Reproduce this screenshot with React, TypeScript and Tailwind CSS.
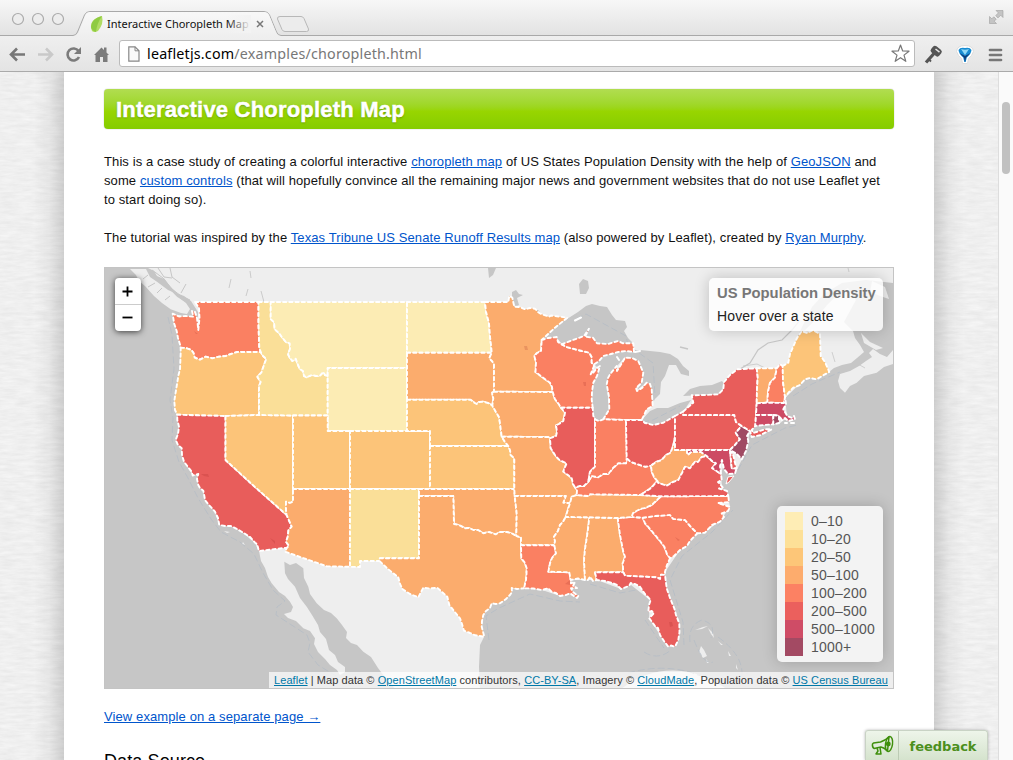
import React from "react";

type Pt = [number, number];

/* Borders shared by neighbouring states. A leading "-" in a ring walks the border backwards. */
const ARCS: Record<string, string> = {
  waN: "195,302 258.5,302",
  waSound: "172.7,313.7 176,315 179,316.5 186,316 193.3,316.7 192,311 195,312 197,318 198.3,330 199.5,318 199,308 195,302",
  waW: "180.7,347.7 180,344.5 178,338 176.7,331 174,323 172.7,313.7",
  waE: "258.5,302 258.5,325 259.3,347.7 260.7,352",
  waS: "260.7,352 237.3,352 231,354 225.7,356 219,356.7 212.3,358.3 205.7,356.7 200,359.7 194.7,357.7 193.5,353 191.3,350 186,348 180.7,347.7",
  orW: "177.3,414.7 175,410 174.3,401 176.7,386 178.5,375 180,369.3 180.7,352.7 180.7,347.7",
  orE: "260.7,352 263,356 266.3,358.7 264,365 261.3,372.7 257.3,376.7 260.7,382 259,386 259,415",
  orCa: "177.3,414.7 200,415.4 225.5,416",
  orNv: "225.5,416 259,415",
  idNv: "259,415 293,415.5",
  idUt: "293,415.5 327.7,415.5",
  idN: "258.5,302 270.7,302",
  idMt: "270.7,302 270.7,319.3 274,322 274.7,329.3 279,333 282.3,337.7 286,342 289.7,343.3 290,349 288,354.3 290,358 292.3,361 295.7,358.7 298,365 300,369.3 303,371 304,376 306.7,377.3 311.7,375 316,376 320,375.7 323.3,372 325,375 327.7,376",
  idWy: "327.7,376 327.7,415.5",
  mtWy: "327.7,376 327.7,368 407,368",
  mtN: "270.7,302 407,302",
  mtNd: "407,302 407,352.7",
  mtSd: "407,352.7 407,368",
  wySd: "407,368 407,399.7",
  wyNe: "407,399.7 407,431",
  wyCo: "350,431 407,431",
  wyUt: "327.7,415.5 327.7,431 350,431",
  ndN: "407,302 485,302",
  ndE: "485,302 486,311.7 489,323.3 490,336.7 491,345 491.7,352.7",
  ndSd: "407,352.7 491.7,352.7",
  sdMn: "491.7,352.7 489.3,358.3 492,361 494,364 494,391.7",
  sdIa: "494,391.7 492,392.7 493.3,398.3 492.3,405.5",
  sdNe: "407,399.7 470.7,399.7 474,402.5 476.7,404 479,402 483.3,401.7 488,403 492.3,405.5",
  neIa: "492.3,405.5 496.7,413.3 499,417 500,423.3 501.7,436.7",
  neMo: "501.7,436.7 505,442 508.3,446",
  neKs: "430,446 508.3,446",
  neCo: "407,431 430,431 430,446",
  coKs: "430,446 430,489",
  utCo: "350,431 350,489",
  utNv: "293,415.5 293,489",
  utAz: "293,489 350,489",
  nvAz: "293,489 293,501.7 290,503 286,501.7 286,510 286.7,515",
  caNv: "225.5,416 225.5,460 255,487 286.7,515",
  caAz: "286.7,515 291.7,526.7 288.5,530 287.7,537 286,541.7 289,546 287,547.7",
  caS: "287,547.7 259,551",
  caW: "259,551 257,544 255,542.7 250,537 243.3,532.7 237,529 230.7,526 225,526 219.3,525 218,518 215,511.7 209,505 205,500 204,494 203.3,490.7 200,488 198.3,485 197,479 198.3,474 192.7,475.5 191.7,471.7 188,467 184,461.7 182,455 181.7,448.3 178,445 175.7,440 178,434 179,426.7 177.3,420 177.3,414.7",
  azS: "287,547.7 285,551.7 306,559 326.7,566.3 350,566.8",
  azNm: "350,489 350,566.8",
  coNm: "350,489 419,489",
  coOk: "419,489 430,489",
  nmOk: "419,489 419,496",
  nmTx: "419,496 419,558.3 379.7,558.3 379.5,561",
  nmS: "379.5,561 360,561 360,567 350,566.8",
  ksOk: "430,489 514.3,489",
  ksMo: "508.3,446 510,450 510.7,455 514.3,458.3 514.3,489",
  okMo: "514.3,489 514.7,496",
  okAr: "514.7,496 516.7,513.3 516.3,536",
  okTx: "419,496 453.3,496 454,524 459,525 465,528.3 469,528 473.3,530 478,530 483.3,533.3 489,532 495.7,534.3 500,532 506.7,532 512,533.5 516.3,536",
  txAr: "516.3,536 521,537.3 521,545.3",
  txLa: "521,545.3 521.3,558.3 525,563 526.7,568.3 526.5,574 526,580 524,588.3",
  txCoast: "524,588.3 517,589 511.7,588 512,592 510,595 506,599 500,603.3 496,604 491.7,603.3 490,608 486,611 483.3,615 482,621 481.7,626.7 484.3,636.7",
  txRio: "484.3,636.7 475,635.3 470,633 464,630.7 462,624 460,618.3 454,611 449.3,605 447.3,596.7 442,592 437.3,587.7 430,588.5 423.3,587.7 421,592 418.3,597.3 410,594 402.7,589.3 400,584 398.3,577.3 388,569 379.5,561",
  mnN: "485,302 508.3,302 509.3,296 512.3,297.7 514.3,306.7 520,307 525,309.3 530,308 535,308.7 538,312 541.7,314.3 549.3,316.7 551,315.5 567.3,317.7",
  mnShore: "567.3,317.7 555,327.7 541.7,340",
  mnWi: "541.7,340 541,351 537,353 534.3,356 536,362 535.5,372 542,377 550,382.7 552,387 552.7,392",
  mnIa: "494,391.7 552.7,392",
  iaWi: "552.7,392 555,399.3 558,403 561,407.7",
  iaIl: "561,407.7 565,412.7 563.3,421 559,424 556,425.3 557,432 556,436 550,438.3",
  iaMo: "501.7,436.7 548,437 550,438.3",
  moIl: "550,438.3 550.7,448.3 555,455 559.3,460 566.7,463.3 565,467 563.3,471.7 568,475 571.7,478.3 573,484 575,487.3",
  moKy: "575,487.3 577,490 576.7,495",
  moTn: "576.7,495 571.7,496.7 570,503.3",
  moAr: "570,503.3 563.3,502.7 565.7,496 514.7,496",
  arTn: "570,503.3 568,509 565.7,517",
  arMs: "565.7,517 563,522 560,525 558,531 554,536.7 555,541 554.3,545.3",
  arLa: "521,545.3 554.3,545.3",
  laMs: "554.3,545.3 556,553.3 552,558 550,563.3 548.3,571.7 569.3,572.3 570.7,580",
  laCoast: "570.7,580 571,583.3 575,582 573,586 577,588 571,588.3 573,592 578.3,596 577,598 570,593.3 566,595 560,596 556,593 552,592 548.3,588.3 541.7,590 533,588.5 524,588.3",
  msTn: "565.7,517 589.3,517.3",
  msAl: "589.3,517.3 588,529 586.7,538.3 585,549 584,560 585,580",
  msCoast: "585,580 578,578.5 570.7,580",
  alTn: "589.3,517.3 617.7,518",
  alGa: "617.7,518 620,535 623.3,551.7 625,556.7 622.7,563.3 623.3,572.3",
  alFl: "623.3,572.3 595,572.3 596.7,580",
  alCoast: "596.7,580 593,581 590,576.7 588,580 585,580",
  gaTn: "617.7,518 631.7,517",
  gaNc: "631.7,517 642.7,517.7",
  gaSc: "642.7,517.7 645,523.3 650,529 655,535 660,541 664.3,546.7 667,554 670,558.3",
  gaCoast: "670,558.3 667,565 665,571.7 665,575",
  gaFl: "665,575 661,574.7 660,579 656.7,577.3 640,576.5 625,575.7 623.3,572.3",
  flCoast: "665,575 666.7,588.3 670,598 674.3,608.3 676,615 679.3,623.3 679.5,632 678.3,640 675,646.7 671,645.5 668.3,646.7 664,641 660,635 658,628 655,626 652,622 649.3,618.3 654,613 651.7,611 648.3,612 649,605 650.7,600 645,594 640,586.7 635,584 630.7,583 629,586 621,589 617,585 613.3,583.3 605,581 596.7,580",
  scNc: "642.7,517.7 655,516 670,515 673.3,519 685,520 691,527 697.3,533.3",
  scCoast: "697.3,533.3 690,541 687,546 680,550 674,556 670,558.3",
  ncTn: "631.7,517 633,513 640,509 645,508 651.7,505 657,500 661,496.3",
  ncVa: "661,496.3 728.3,496",
  ncCoast: "728.3,496 729,502 718,503 730,507 728,511 721.7,513.3 724,517 720,521.7 712,525 705,532.7 697.3,533.3",
  tnVa: "640,495 661,496.3",
  tnKy: "576.7,495 588,496 590,494.3 640,495",
  kyIl: "575,487.3 580,486 584,486 588.3,481.7",
  kyIn: "588.3,481.7 591.7,476 598.3,477.3 603,474 608.3,474 613,468 618.3,463.3 626,463.3 626.7,458.3",
  kyOh: "626.7,458.3 631,462 636.7,464 645,466.7 651,465.7",
  kyWv: "651,465.7 651.7,471.7 654,477 657.3,481",
  kyVa: "657.3,481 651,488 645,492 640,495",
  ilWi: "561,407.7 592.7,407.7",
  ilLake: "592.7,407.7 593.3,416 595,419.3",
  ilIn: "595,419.3 595,466.7 590,471.7 588.3,481.7",
  inLake: "595,419.3 599,421 603.3,419.3",
  inMi: "603.3,419.3 626,420",
  inOh: "626,420 626.7,458.3",
  ohMi: "626,420 641.7,420",
  ohLake: "641.7,420 645,423 653.3,425 663.3,422.7 675,416",
  ohPa: "675,416 675,437",
  ohWv: "675,437 673.3,445 670.7,452.7 666,455 661.7,460 656,462 651,465.7",
  paLake: "675,416 683.3,411.5",
  paNy: "683.3,411.5 683.3,415 734.3,415 736,422 741.7,426",
  paNj: "741.7,426 735.7,432.7 740,439.3 735,445 730,450",
  paS: "730,450 686.7,450",
  paWv: "686.7,450 675,450 675,437",
  wvMd: "686.7,450 687.7,455 691,452 695,451.7 701,452 706.7,456",
  wvVa: "706.7,456 701.7,457 698,462 695,461.7 690,468.3 685,466.7 682,473 678.3,480 673,482 666.7,485.7 658.3,483 657.3,481",
  mdVa: "706.7,456 712,461 716,463.3 712,468 721,474",
  mdBay: "721,474 720,466 722,460 724,469 728,474 735,473.5 736.5,468.3",
  mdDe: "736.5,468.3 731.7,468.3 730,450",
  deE: "730,450 733.5,456 734.5,461 736.5,468.3",
  vaE: "721,474 721.7,480 718,482 722.7,487.3 719,488.5 727,491 728.3,496",
  njE: "741.7,426 750,431 747,436 748.3,441 746,451 741.7,459.3 737,454 730,450",
  nyN: "683.3,411.5 693.3,402.7 691.7,395.3 705,395 718.3,394.3 723.3,389.3 724,382 730,375 737.3,369.3 756.7,368.3",
  nyVt: "756.7,368.3 757.7,377 757,389.3 756.7,403.3",
  nyMa: "756.7,403.3 756,415",
  nyCt: "756,415 755.3,426",
  nyS: "755.3,426 751.7,430 753.3,433 765,429.3 771.7,429.3 760,435.3 751.7,437 750,431 741.7,426",
  vtN: "756.7,368.3 776.7,368.3",
  vtNh: "776.7,368.3 775,377.7 770,382.7 768,392 767.3,402.7",
  vtMa: "767.3,402.7 756.7,403.3",
  nhN: "776.7,368.3 780,364.3 782.7,366",
  nhMe: "782.7,366 783,382 785,397",
  nhMa: "785,397 784,403 767.3,402.7",
  meE: "782.7,366 788.3,362.7 790,354 793,347 797,338 801.7,331 807,333 813,330 820,334 820.7,356 825,362 829.3,372 822,376 816.7,379.3 810,378 805,379.3 800,385 793.3,387.7 789,392 785,397",
  maCoast: "785,397 786,404 783.3,409.3 787.3,416 792,418 794,416 795,419.3 788.3,421 785,418 782,420 779,416",
  maCt: "756,415 773.3,415",
  maRi: "773.3,415 779,416",
  ctRi: "773.3,415 773.3,424.3",
  riE: "779,416 779,423 773.3,424.3",
  ctS: "773.3,424.3 764,425 755.3,426",
  wiN: "541.7,340 548,338 556.7,337 558,342 561.7,344.3",
  wiMi: "561.7,344.3 566.7,347 578,350 589.3,352.7 591.7,357 591.7,362.7",
  wiLake: "591.7,362.7 594,366 590.7,374.3 593,373 597,368 600,366 597,376 593.3,382.7 592,392 591.7,399.3 592.7,407.7",
  upN: "561.7,344.3 573,340 584,336 589,328.7 585,336.7 593,337.7 597,343.3 608,344 618,341 623,343.3 633.3,343.3 634,352 626,351 618.3,352 611,354 603.3,356 599,361 594.3,364.3 591.7,362.7",
  miLp: "603.3,419.3 609.3,409.3 609,397 606.7,384.3 608,378 610,374.3 616.7,366 617,371 622,363 625,357.7 632,358 638.3,361 643.3,372.7 641.7,382.7 636,388 637,391 642,388 646.7,382.7 650,384 651.7,389.3 652.7,406 646.7,409.3 641.7,420",
};

const C = {
  d0: "#fcecb4",
  d10: "#fadf98",
  d20: "#fcc479",
  d50: "#fbac6d",
  d100: "#fa8062",
  d200: "#e85d5b",
  d500: "#cd4a64",
  d1000: "#a04a63",
};

const STATES: [string, string, string][] = [
  ["Washington", C.d100, "waN waE waS waW waSound"],
  ["Oregon", C.d20, "-waS orE -orNv -orCa orW"],
  ["California", C.d200, "orCa caNv caAz caS caW"],
  ["Nevada", C.d20, "orNv idNv utNv nvAz -caNv"],
  ["Idaho", C.d10, "idN idMt idWy -idUt -idNv -orE -waE"],
  ["Montana", C.d0, "mtN mtNd mtSd -mtWy -idMt"],
  ["Wyoming", C.d0, "mtWy wySd wyNe -wyCo -wyUt -idWy"],
  ["Utah", C.d20, "idUt wyUt utCo -utAz -utNv"],
  ["Colorado", C.d20, "wyCo neCo coKs -coOk -coNm -utCo"],
  ["Arizona", C.d50, "utAz azNm -azS -caAz -nvAz"],
  ["New Mexico", C.d10, "coNm nmOk nmTx nmS -azNm"],
  ["North Dakota", C.d0, "ndN ndE -ndSd -mtNd"],
  ["South Dakota", C.d50, "ndSd sdMn sdIa -sdNe -wySd -mtSd"],
  ["Nebraska", C.d20, "sdNe neIa neMo -neKs -neCo -wyNe"],
  ["Kansas", C.d20, "neKs ksMo -ksOk -coKs"],
  ["Oklahoma", C.d50, "coOk ksOk okMo okAr -okTx -nmOk"],
  ["Texas", C.d50, "okTx txAr txLa txCoast txRio -nmTx"],
  ["Minnesota", C.d50, "mnN mnShore mnWi -mnIa -sdMn -ndE"],
  ["Iowa", C.d50, "mnIa iaWi iaIl -iaMo -neIa -sdIa"],
  ["Missouri", C.d50, "iaMo moIl moKy moTn moAr -okMo -ksMo -neMo"],
  ["Arkansas", C.d50, "-moAr arTn arMs -arLa -txAr -okAr"],
  ["Louisiana", C.d100, "arLa laMs laCoast -txLa"],
  ["Mississippi", C.d50, "msTn msAl msCoast -laMs -arMs"],
  ["Alabama", C.d50, "alTn alGa alFl alCoast -msAl"],
  ["Georgia", C.d100, "gaTn gaNc gaSc gaCoast gaFl -alGa"],
  ["Florida", C.d200, "-gaFl flCoast -alFl"],
  ["South Carolina", C.d100, "scNc scCoast -gaSc"],
  ["North Carolina", C.d100, "ncVa ncCoast -scNc -gaNc ncTn"],
  ["Tennessee", C.d50, "tnKy tnVa -ncTn -gaTn -alTn -msTn -arTn -moTn"],
  ["Kentucky", C.d100, "kyIl kyIn kyOh kyWv kyVa -tnKy -moKy"],
  ["Wisconsin", C.d100, "wiN wiMi wiLake -ilWi -iaWi -mnWi"],
  ["Illinois", C.d200, "ilWi ilLake ilIn -kyIl -moIl -iaIl"],
  ["Michigan Upper", C.d100, "upN -wiMi"],
  ["Michigan Lower", C.d100, "miLp -ohMi -inMi"],
  ["Indiana", C.d100, "inLake inMi inOh -kyIn -ilIn"],
  ["Ohio", C.d200, "ohMi ohLake ohPa ohWv -kyOh -inOh"],
  ["West Virginia", C.d50, "-paWv wvMd wvVa -kyWv -ohWv"],
  ["Virginia", C.d200, "mdVa vaE -ncVa -tnVa -kyVa -wvVa"],
  ["Pennsylvania", C.d200, "paLake paNy paNj paS paWv -ohPa"],
  ["Maryland", C.d500, "-paS -mdDe -mdBay -mdVa -wvMd"],
  ["Delaware", C.d200, "deE mdDe"],
  ["New Jersey", C.d1000, "njE -paNj"],
  ["New York", C.d200, "nyN nyVt nyMa nyCt nyS -paNy"],
  ["Vermont", C.d50, "vtN vtNh vtMa -nyVt"],
  ["New Hampshire", C.d100, "nhN nhMe nhMa -vtNh"],
  ["Maine", C.d20, "meE -nhMe"],
  ["Massachusetts", C.d500, "-vtMa -nhMa maCoast -maRi -maCt -nyMa"],
  ["Connecticut", C.d500, "maCt ctRi ctS -nyCt"],
  ["Rhode Island", C.d1000, "maRi riE -ctRi"],
];

function arcPoints(ref: string): Pt[] {
  const back = ref.startsWith("-");
  const pts = ARCS[back ? ref.slice(1) : ref].split(" ").map((p) => p.split(",").map(Number) as Pt);
  return back ? pts.reverse() : pts;
}

function ring(spec: string): string {
  const pts = spec.split(" ").flatMap(arcPoints);
  return "M" + pts.map((p) => p.join(",")).join("L") + "Z";
}

const WATER = "#c6c6c6";
const LAND = "#eeeeee";

function Basemap() {
  return (
    <g>
      <rect x="105" y="268" width="788" height="420" fill={WATER} />
      {/* continent */}
      <path
        fill={LAND}
        d="M148,268 L154,271 157,276 164,279 168,285 175.7,292.7 184,296 191,301 198,312 198,330 193,318 173,314 177,331 181,348 180,369 174,401 177,415 179,427 176,440 182,448 184,462 192,474 198,476 203,491 205,500 215,512 219,525 231,526 243,533 255,543 259,551 261,561 265,568 268,577 271.7,583.3 279,592 285,596 290,601.7 293,607 291,612 284,614 288,618 296,621 303.3,628.3 310,631 315,638.3 314,644 318,652 325,659 330,665 337,670 340,675 345,672 345,667 338,662 335,655 329,650 326,639 320,632 318,625 312,615 306.7,606.7 300,598 295,586.7 288,579 285,573.3 284.3,561.7 290,565 296,563 303.3,568.3 304,578 308.3,586.7 310,594 316.7,603.3 324,610 331,613 336.7,618.3 342,625 347,632 346,638 351,643 357,645 363.3,651.7 371,657 378,668 384,676 396,690 480,690 479,666.7 480,645 484,637 482,627 483,615 492,603 510,595 512,589 524,588 542,590 560,596 570,590 571,580 597,580 621,589 631,585 650,600 649,618 660,635 669,647 678,640 679,623 667,588 665,572 680,550 697,533 705,532 720,521 730,507 728,496 722,487 721,474 727,454 735,474 742,459 748,441 750,431 755,426 779,424 784,420 795,419 787,416 785,398 805,379 829,372 834,368 842,365 851,363 857,358 864,352 860,345 855,338 853,331 844,322 856,300 848,288 838,294 827,305 814,321 801,334 797,338 803,325 812,307 824,294 842,283 866,280 893,283 V268Z"
      />
      {/* Nova Scotia and the gulf shore */}
      <path fill={LAND} d="M838,381 L840,374 850,371 859,366 866,361 872,357 869,353 873,349 880,354 887,357 893,350 893,364 884,367 876.7,372.7 864,376 856.7,382.7 850,386 845,392.7 840,388Z" />
      <path fill={LAND} d="M861,333 L870,342 883,348 876,350 864,343Z M872,281 L885,287 889,299 880,296 870,292Z" />
      {/* Vancouver Island */}
      <path fill={LAND} d="M130,269 L146,269 150,277 157.3,282 168,290 175,293 180.7,299 186,303 190,309 187,314 181,313 170.7,309.3 162,303 154,296 145,286 139,281 136,275Z" />
      <g fill="none" stroke={WATER} strokeWidth="1">
        <path d="M143,279 l5,-4 M148,287 l7,-4 M157,293 l5,-5 M165,300 l5,-4 M158,268 l6,9 8,1 M170,268 l2,9 8,6 M181,293 l5,-9 M152,270 l11,8 9,11 9,7 9,4" />
        <path strokeWidth="2.4" d="M163,279 l6,8 9,9 10,6" />
        <path strokeWidth=".9" d="M231,279 l-2,9 M250,271 l1,7 M261,291 l3,11 M248,289 l-2,7" />
      </g>
      {/* lakes */}
      <g fill={WATER}>
        <path d="M541.7,340 L555,327 567,319 578,312 586,306 592,304 600,306 607,307 612,315 616,320 625,321 627,327 624,331 628,338 633,343 625,350 597,343 593,338 585,337 584,336 562,344 556,337Z" />
        <path d="M634,350 L640,350 650,351 660,352 670,354 678,359 683,366 689,371 689,376 681,374 676,365 669,365 665,376 661,382 660,394 656,398 651,402 652,389 646,383 637,390 642,382 643,373 638,361 625,357 617,366 610,374 607,384 609,409 603,419 597,421 593,414 592,399 593,383 599,369 594,364 603,356 618,352Z" />
        <path d="M641.7,420 L650,411 657,408 668,408 680,403 691,400 683.3,411.5 675,416.5 663,423 653,425Z" />
        <path d="M683,396 L690,389 700,386 712,385 722,381 724,387 718,394 705,395Z" />
        <path d="M579,284 L583,279 588,281 589,288 586,294 580,294Z M488,268 h8 l-3,7 -4,3Z M512,292 l4,-2 3,4 4,1 -6,3 2,7 -4,2 -3,-9Z" />
        <path d="M653,392 l3,4 -2,5 -3,-4Z M575,316 l7,-4 3,3 -8,3Z M530,310 l8,0 3,3 -5,-1Z" />
      </g>
      <g fill="none" stroke={WATER}>
        <path strokeWidth="1.2" d="M722,383 L735,372 750,363 758,350 768,343 782,340 792,330 800,320" />
        <path strokeWidth=".8" d="M743,366 l14,-2 8,4 M835,362 l-3,-10 M858,364 l7,4 M880,338 l5,2 M848,268 l1,4" />
        <path d="M680,347 l8,2" strokeWidth="1.5" />
      </g>
      {/* Bahamas and Cuba */}
      <g fill={LAND}>
        <path d="M695,630 l8,-3 5,-1 -6,3Z M708,628 l5,5 1,5 -3,-4Z M701,646 l3,4 3,6 -4,2 -4,-6Z M706,659 l3,4 -2,0Z M718,641 l5,4 -2,0Z M728,651 l3,5 -2,0Z M736,664 l2,6 -2,-2Z" />
        <path d="M620,690 Q650,665 690,672 Q712,678 728,690Z" />
        <path d="M224,531 l6,1 -3,1Z M243,542 l2,3 -3,-1Z" />
      </g>
      {/* maritime limits */}
      <g fill="none" stroke="#b5bdc6" strokeWidth="1" strokeDasharray="7 3" opacity=".8">
        <path d="M168,317 L172,335 174,369 170,400 173,418 172,440 179,462 188,478 198,498 211,519 221,532 240,542 254,554 263,573 273,590 285,601 277,607 276,615 290,624 307,635 310,643 308,652 318,665 336,676" />
        <path d="M576,319 L586,314 626,336 628,345 653,363 655,396 M642,422 L653,420 680,406" />
        <path d="M489,640 L486,616 499,608 530,594 560,601 580,602 M590,584 L620,593 636,590 M645,620 L664,648 M684,645 L683,622 670,580 682,556 712,532 733,510 M738,470 L752,445 785,428 797,425 M793,396 L812,384 840,372" />
        <path d="M644,652 Q658,661 671,650 M690,642 Q688,625 702,620 Q717,624 711,638 M694,640 Q704,666 713,662 M718,637 Q743,655 742,675 M628,673 Q660,664 690,672 Q720,685 748,673" />
      </g>
    </g>
  );
}

function Choropleth() {
  return (
    <svg viewBox="105 268 788 420" width="788" height="420" className="block">
      <Basemap />
      {STATES.map(([name, fill, spec]) => (
        <path key={name} d={ring(spec)} fill={fill} stroke="#fff" strokeWidth="1.9" strokeDasharray="3.2 3" strokeLinejoin="round" strokeLinecap="round" />
      ))}
      {/* Eastern Shore, Isle Royale and small islands */}
      <path fill={C.d200} stroke="#fff" d="M726,484 L728,477 734,476 729,482Z" />
      <path stroke="#fff" strokeWidth="2" strokeLinecap="round" d="M575,320.500 l6,-3 M617,357 l2,3 M785,423 l2,0 M791,423 l3,0 M635,352 l5,-1" />
      <g fill="#9b2020" opacity=".18">
        <path d="M194,331 l2,3 2,0 -1,-4 1,4Z M201,474 l7,0 1,3 -5,-1Z M270,538 l5,3 0,3Z M669,622 l3,0 1,4 -3,1Z M583,382 l3,0 0,4 -2,0Z M524,346 l3,0 1,4 -3,0Z M565,584 l5,-4 0,5Z M675,537 l5,3 -2,1Z" />
      </g>
    </svg>
  );
}

const LEGEND: [string, string][] = [
  ["0–10", "bg-[#feedb5]"],
  ["10–20", "bg-[#fde097]"],
  ["20–50", "bg-[#fdc678]"],
  ["50–100", "bg-[#fdac6d]"],
  ["100–200", "bg-[#fc8163]"],
  ["200–500", "bg-[#eb605d]"],
  ["500–1000", "bg-[#cf4c66]"],
  ["1000+", "bg-[#a34a63]"],
];

function A({ children }: { children: React.ReactNode }) {
  return <a className="text-[#0055cc] underline">{children}</a>;
}
function MA({ children }: { children: React.ReactNode }) {
  return <a className="text-[#0078a8] underline">{children}</a>;
}

function MapPanel() {
  return (
    <div className="relative mt-[20px] h-[422px] w-[790px] overflow-hidden border border-[#c4c4c4] tracking-normal">
      <Choropleth />
      <div className="absolute left-[10px] top-[10px] w-[26px] rounded-[4px] bg-white shadow-[0_1px_6px_rgba(0,0,0,0.7)]">
        <div className="flex h-[27px] items-center border-b border-[#ccc] pl-[7px]">
          <svg width="11" height="11" viewBox="0 0 11 11"><path d="M5.500 .5v10M.5 5.500h10" stroke="#000" strokeWidth="1.800" /></svg>
        </div>
        <div className="flex h-[26px] items-center pb-[1px] pl-[7px]">
          <svg width="11" height="11" viewBox="0 0 11 11"><path d="M.5 5.500h10" stroke="#000" strokeWidth="1.800" /></svg>
        </div>
      </div>
      <div className="absolute right-[10px] top-[10px] h-[53px] w-[174px] rounded-[5px] bg-white/80 pl-[8px] pt-[5px] shadow-[0_0_15px_rgba(0,0,0,0.2)]">
        <div className="whitespace-nowrap text-[14.8px] font-bold leading-[20px] text-[#777]">US Population Density</div>
        <div className="mt-[3px] whitespace-nowrap text-[14px] leading-[20px] tracking-[0.13px] text-[#222]">Hover over a state</div>
      </div>
      <div className="absolute bottom-[26px] right-[10px] w-[106px] rounded-[5px] bg-[#f3f3f3] px-[8px] py-[6px] shadow-[0_0_15px_rgba(0,0,0,0.2)]">
        {LEGEND.map(([label, color]) => (
          <div key={label} className="flex h-[18px] items-center gap-[8px] text-[14px] tracking-[0.2px] text-[#555]">
            <span className={`h-[18px] w-[18px] shrink-0 ${color}`} />
            <span className="whitespace-nowrap leading-[18px]">{label}</span>
          </div>
        ))}
      </div>
      <div className="absolute bottom-0 right-0 h-[16px] w-[624px] whitespace-nowrap bg-white/70 pl-[5px] text-[11px] leading-[16px] tracking-[0.076px] text-[#333]">
        <MA>Leaflet</MA> | Map data © <MA>OpenStreetMap</MA> contributors, <MA>CC-BY-SA</MA>, Imagery © <MA>CloudMade</MA>, Population data © <MA>US Census Bureau</MA>
      </div>
    </div>
  );
}

function Paper({ id }: { id: string }) {
  return (
    <svg className="block h-full w-full">
      <filter id={id} x="0" y="0" width="100%" height="100%" colorInterpolationFilters="sRGB">
        <feTurbulence type="fractalNoise" baseFrequency="0.06 0.32" numOctaves="4" seed="4" />
        <feColorMatrix values="0.07 0 0 0 0.902  0.07 0 0 0 0.902  0.07 0 0 0 0.902  0 0 0 0 1" />
      </filter>
      <rect width="100%" height="100%" filter={`url(#${id})`} />
    </svg>
  );
}

function TabStrip() {
  return (
    <div className="h-[36px] bg-linear-to-b from-[#f7f7f7] to-[#e2e2e2]">
      <div className="relative flex h-[36px] items-start">
        <svg className="absolute left-0 top-0" width="1013" height="36" viewBox="0 0 1013 36">
          <defs>
            <linearGradient id="tab" x1="0" x2="0" y1="0" y2="1">
              <stop offset="0" stopColor="#f8f8f8" />
              <stop offset="1" stopColor="#efefef" />
            </linearGradient>
          </defs>
          <path d="M0 35.500H73Q76 35.500 77.500 32L84.500 15Q86 11.500 90 11.500H264Q268 11.500 269.500 15L276.500 32Q278 35.500 281 35.500H1013" fill="none" stroke="#a9a9a9" />
          <path d="M74 36Q77 35.500 78.500 32L85.500 15Q87 12 90 12H264Q267.500 12 269 15L276 32Q277.500 36 281 36Z" fill="url(#tab)" />
          <path d="M280 16.500H301Q303 16.500 304 18.500L308.500 29Q309 31.500 306.500 31.500H285Q283 31.500 282 29.500L277.500 19Q277 16.500 280 16.500Z" fill="#ececec" stroke="#b8b8b8" />
          {[18, 38, 58].map((x) => (
            <circle key={x} cx={x} cy="19" r="5.500" fill="#ededed" stroke="#aaa" strokeWidth="1.200" />
          ))}
          <path d="M91 28Q90 19 102 16Q104 24 98 31Q94 33 92 31Z" fill="#b0dc62" />
          <path d="M96 32Q92 31 91 27Q91 19 102 16Q97 23 96 32Z" fill="#8fcb42" />
          <path d="M257 21l6 6M263 21l-6 6" stroke="#777" strokeWidth="1.500" />
          <g fill="#c4c4c4" stroke="#a0a0a0" strokeWidth=".6">
            <path d="M996 10.500h7v7l-2.300-2.300-2.700 2.700-2.300-2.300 2.700-2.700Z M989.500 16.500v7h7l-2.300-2.300 2-2-2.400-2.400-2 2Z" />
          </g>
        </svg>
        <div className="relative ml-[107px] mt-[15px] w-[144px] whitespace-nowrap font-['Noto_Sans',sans-serif] text-[11px] leading-[18px] text-[#111]">
          Interactive Choropleth Map
          <div className="absolute right-0 top-0 h-[18px] w-[24px] bg-linear-to-r from-[#f3f3f3]/0 to-[#f3f3f3]" />
        </div>
      </div>
    </div>
  );
}

function Toolbar() {
  return (
    <div className="flex h-[36px] items-center border-b border-[#aaa] bg-linear-to-b from-[#efefef] to-[#e4e4e4]">
      <svg className="shrink-0" width="119" height="34" viewBox="0 36 119 34">
        <g fill="none" strokeWidth="2.600">
          <path d="M25 53.500H12M17 47.500l-6 6 6 6" stroke="#777" />
          <path d="M38 53.500H51M46 47.500l6 6-6 6" stroke="#c9c9c9" />
          <path d="M78.500 50A6 6 0 1 0 79 56" stroke="#7b7b7b" />
        </g>
        <path d="M81 46v7h-7Z" fill="#7b7b7b" />
        <path d="M94 54l7.500-7.500 2.500 2.500V46.500h2.500V51.500L109 54h-1.500v7h-4.500v-5h-3v5h-4.500v-7Z" fill="#7b7b7b" />
      </svg>
      <div className="flex h-[27px] w-[796px] shrink-0 items-center rounded-[3px] border border-[#bbb] bg-white">
        <svg className="ml-[8px] shrink-0" width="12" height="16" viewBox="0 0 12 16">
          <path d="M.8.8h6.200l4 4V15.200H.8Z" fill="#fafafa" stroke="#888" strokeWidth="1.200" />
          <path d="M7 .8v4h4" fill="none" stroke="#888" />
        </svg>
        <div className="ml-[7px] whitespace-nowrap font-['Noto_Sans',sans-serif] text-[14.300px] leading-[24px] tracking-[0.19px] text-black">
          leafletjs.com<span className="text-[#777]">/examples/choropleth.html</span>
        </div>
        <svg className="ml-auto mr-[4px]" width="19" height="19" viewBox="0 0 19 19">
          <path d="M9.500 1l2.200 6 6.300.2-5 3.900 1.800 6.200-5.300-3.600-5.300 3.600 1.800-6.200L1 7.200l6.300-.2Z" fill="#fff" stroke="#777" strokeWidth="1.200" strokeLinejoin="round" />
        </svg>
      </div>
      <svg className="shrink-0" width="98" height="34" viewBox="915 36 98 34">
        <path d="M926 61.500l8-9" stroke="#555" strokeWidth="3.200" />
        <path d="M928 57.500l3 3" stroke="#555" strokeWidth="1.800" />
        <rect x="931" y="46" width="10.500" height="8" rx="2.500" transform="rotate(38 936 50)" fill="#555" />
        <path d="M935.500 48l4 3.200" stroke="#e8e8e8" strokeWidth="1.500" />
        <path d="M956.500 50.500Q957 44.500 965 44.500Q973 44.500 973.500 50.500Q972 55 968.500 57.500L967.500 62.500H962.500L961.500 57.500Q958 55 956.500 50.500Z" fill="#fff" stroke="#ddd" />
        <path d="M958.500 49Q960 46 965 47Q970 46 971.500 49Q971 53 966.800 56.500L965.700 61H964.300L963.200 56.500Q959 53 958.500 49Z" fill="#168bd2" />
        <path d="M961 48Q965 49.500 969 48L965 54Z" fill="#8fd8f5" />
        <path d="M959.500 52l4.500 4.500 1 4.500 1-4.500 4.500-4.500-5.500 3Z" fill="#123a75" />
        <path d="M990 49h11M990 54h11M990 59h11" stroke="#777" strokeWidth="2.700" strokeLinecap="round" />
      </svg>
    </div>
  );
}

export default function App() {
  return (
    <div className="relative flex h-[760px] w-[1013px] flex-col overflow-hidden bg-[#eee] font-['Liberation_Sans',Arial,sans-serif]">
      <TabStrip />
      <Toolbar />
      <div className="flex h-[688px]">
        <div className="relative w-[64px] shrink-0">
          <Paper id="paperL" />
          <div className="absolute inset-y-0 right-0 w-[30px] bg-linear-to-r from-black/0 via-black/4 to-black/14" />
        </div>
        <main className="h-[688px] w-[870px] shrink-0 overflow-hidden bg-white px-[40px] pt-[17px] text-[13px] leading-[19px] tracking-[0.104px] text-[#111]">
          <h1 className="flex h-[40px] w-[790px] items-center rounded-[4px] bg-linear-to-b from-[#b1dd50] via-[#98d500] via-55% to-[#85cc00] pl-[12px] text-[22px] font-bold tracking-[0.2px] text-white shadow-[0_0_1px_#888] [-webkit-text-stroke:0.5px_white] [text-shadow:0_1px_2px_rgba(60,100,0,0.55)]">
            <span className="whitespace-nowrap">Interactive Choropleth Map</span>
          </h1>
          <p className="mt-[23px] whitespace-nowrap">
            This is a case study of creating a colorful interactive <A>choropleth map</A> of US States Population Density with the help of <A>GeoJSON</A> and
            <br />
            some <A>custom controls</A> (that will hopefully convince all the remaining major news and government websites that do not use Leaflet yet
            <br />
            to start doing so).
          </p>
          <p className="mt-[19px] whitespace-nowrap">
            The tutorial was inspired by the <A>Texas Tribune US Senate Runoff Results map</A> (also powered by Leaflet), created by <A>Ryan Murphy</A>.
          </p>
          <MapPanel />
          <p className="mt-[18px]"><A>View example on a separate page →</A></p>
          <h3 className="mt-[23px] text-[18px] leading-[24px] text-black">Data Source</h3>
        </main>
        <div className="relative w-[64px] shrink-0">
          <Paper id="paperR" />
          <div className="absolute inset-y-0 left-0 w-[30px] bg-linear-to-l from-black/0 via-black/4 to-black/14" />
        </div>
        <div className="w-[15px] shrink-0 border-l border-[#ddd] bg-[#fafafa] pl-[3px] pt-[30px]">
          <div className="h-[72px] w-[8px] rounded-full bg-[#c1c1c1]" />
        </div>
      </div>
      <div className="absolute bottom-0 left-[865px] flex h-[30px] w-[123px] rounded-t-[3px] border border-b-0 border-[#c9d3c5] bg-linear-to-b from-[#eef5ea] to-[#d5e3cd] shadow-[0_0_3px_rgba(0,0,0,0.3)]">
        <div className="flex w-[33px] items-center justify-center border-r border-[#bccbb4]">
          <svg width="23" height="21" viewBox="0 0 23 21" fill="none" stroke="#3f8f0c" strokeWidth="1.500" strokeLinejoin="round">
            <path d="M1.500 9Q1 12 3 13.500L10 12Q13 12.500 16.500 16L18 2Q14 5.500 9.500 7L2.500 8Z" />
            <ellipse cx="18" cy="9" rx="3.500" ry="7.500" transform="rotate(8 18 9)" />
            <circle cx="17.300" cy="9" r="1.700" fill="#3f8f0c" />
            <path d="M6 13l1 3-2 3h5l-1-6.500" />
          </svg>
        </div>
        <div className="flex flex-1 items-center justify-center pt-[3px] font-['DejaVu_Sans',sans-serif] text-[13px] font-bold text-[#4c8f1c]">feedback</div>
      </div>
    </div>
  );
}
